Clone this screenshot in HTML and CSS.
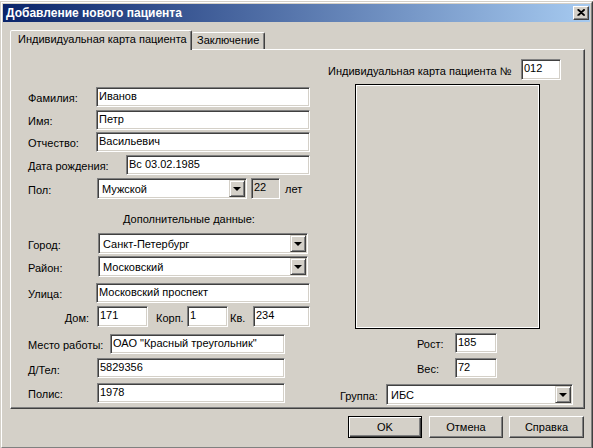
FILE: index.html
```html
<!DOCTYPE html>
<html lang="ru">
<head>
<meta charset="utf-8">
<title>Добавление нового пациента</title>
<link rel="stylesheet" href="styles.css">
</head>
<body>
<div class="window">
  <div class="frame">
    <div class="titlebar">
      <span class="title">Добавление нового пациента</span>
      <span class="close"><svg width="8" height="7" viewBox="0 0 8 7"><path d="M0.5 0.5 L7 6.5 M1.5 0.5 L8 6.5 M7 0.5 L0.5 6.5 M8 0.5 L1.5 6.5" stroke="#000" stroke-width="1.1" fill="none"/></svg></span>
    </div>
    <div class="client">
      <div class="tabs">
        <div class="tab active">Индивидуальная карта пациента</div>
        <div class="tab second">Заключение</div>
      </div>
      <div class="panel">
        <div class="left">
          <div class="row mt37"><span class="lbl">Фамилия:</span><span class="edit w214">Иванов</span></div>
          <div class="row mt3"><span class="lbl">Имя:</span><span class="edit w214">Петр</span></div>
          <div class="row mt2"><span class="lbl">Отчество:</span><span class="edit w214">Васильевич</span></div>
          <div class="row mt3"><span class="lbl w98">Дата рождения:</span><span class="edit w184">Вс 03.02.1985</span></div>
          <div class="row h21 mt3"><span class="lbl w69">Пол:</span><span class="select w150"><span class="sel-text">Мужской</span><span class="sel-btn"><i class="tri"></i></span></span><span class="edit readonly w29">22</span><span class="unit">лет</span></div>
          <div class="section">Дополнительные данные:</div>
          <div class="row h21 mt7"><span class="lbl w70">Город:</span><span class="select w210"><span class="sel-text">Санкт-Петербург</span><span class="sel-btn"><i class="tri"></i></span></span></div>
          <div class="row h21 mt2"><span class="lbl w70">Район:</span><span class="select w210"><span class="sel-text">Московский</span><span class="sel-btn"><i class="tri"></i></span></span></div>
          <div class="row mt6"><span class="lbl">Улица:</span><span class="edit w214">Московский проспект</span></div>
          <div class="row h21 mt3"><span class="lbl w69 ralign">Дом:</span><span class="edit w51">171</span><span class="lbl-korp">Корп.</span><span class="edit w41">1</span><span class="lbl-kv">Кв.</span><span class="edit w57">234</span></div>
          <div class="row mt7"><span class="lbl w82">Место работы:</span><span class="edit w175">ОАО "Красный треугольник"</span></div>
          <div class="row mt4"><span class="lbl w69 low">Д/Тел:</span><span class="edit w188">5829356</span></div>
          <div class="row mt5"><span class="lbl w69">Полис:</span><span class="edit w188">1978</span></div>
        </div>
        <div class="side">
          <div class="row h21 mt9"><span class="lbl w193">Индивидуальная карта пациента №</span><span class="edit w40">012</span></div>
          <div class="photo"></div>
          <div class="row mt4 indent89"><span class="lbl w38">Рост:</span><span class="edit w42">185</span></div>
          <div class="row mt5 indent89"><span class="lbl w38">Вес:</span><span class="edit w42">72</span></div>
          <div class="row h21 mt6 indent12"><span class="lbl w46">Группа:</span><span class="select w187"><span class="sel-text">ИБС</span><span class="sel-btn"><i class="tri"></i></span></span></div>
        </div>
      </div>
      <div class="buttons">
        <button class="btn default" type="button"><span>OK</span></button>
        <button class="btn" type="button"><span>Отмена</span></button>
        <button class="btn wide" type="button"><span>Справка</span></button>
      </div>
    </div>
  </div>
</div>
</body>
</html>
```
FILE: styles.css
```css
* { box-sizing: border-box; }
html, body { margin: 0; padding: 0; }
body {
  background: #ffffff;
  width: 593px;
  height: 448px;
  overflow: hidden;
  font-family: "Liberation Sans", Arial, sans-serif;
  font-size: 11px;
  color: #000;
}
.window {
  margin-top: 1px;
  width: 593px;
  height: 448px;
  background: #d4d0c8;
  border: 1px solid;
  border-color: #d4d0c8 #404040 #404040 #d4d0c8;
}
.frame {
  height: 100%;
  border: 1px solid;
  border-color: #ffffff #808080 #808080 #ffffff;
  padding: 1px;
}
.titlebar {
  height: 18px;
  background: linear-gradient(to right, #0a246a, #a6caf0);
  display: flex;
  align-items: center;
  justify-content: space-between;
  padding: 0 1px 0 3px;
}
.title {
  color: #fff;
  font-weight: bold;
  font-size: 12px;
  line-height: 14px;
}
.close {
  width: 16px;
  height: 14px;
  background: #d4d0c8;
  border: 1px solid;
  border-color: #ffffff #404040 #404040 #ffffff;
  box-shadow: inset -1px -1px 0 #808080;
  display: flex;
  align-items: center;
  justify-content: center;
  padding: 0 1px 1px 0;
}
.close svg { display: block; }
.client {
  padding: 8px 5px 0 7px;
}
.tabs {
  display: flex;
  align-items: flex-end;
  height: 19px;
  position: relative;
  z-index: 1;
}
.tab {
  height: 17px;
  padding: 0 6px;
  line-height: 15px;
  white-space: nowrap;
  background: #d4d0c8;
  border: 1px solid;
  border-bottom: none;
  border-color: #ffffff #404040 transparent #ffffff;
  border-radius: 2px 2px 0 0;
  box-shadow: inset -1px 0 0 #808080;
}
.tab.active {
  width: 182px;
  height: 20px;
  margin-bottom: -1px;
  padding-left: 7px;
  line-height: 16px;
}
.tab.second {
  width: 73px;
  border-left: none;
  padding-left: 5px;
}
.panel {
  width: 575px;
  height: 360px;
  display: flex;
  border: 1px solid;
  border-color: #ffffff #404040 #404040 #ffffff;
  box-shadow: inset -1px -1px 0 #808080;
  padding-left: 17px;
}
.left { width: 282px; display: flex; flex-direction: column; }
.side { width: 245px; margin-left: 18px; display: flex; flex-direction: column; }

.row { display: flex; align-items: center; height: 20px; flex: none; }
.h21 { height: 21px; }
.mt2 { margin-top: 2px; } .mt3 { margin-top: 3px; } .mt4 { margin-top: 4px; }
.mt5 { margin-top: 5px; } .mt6 { margin-top: 6px; } .mt7 { margin-top: 7px; }
.mt9 { margin-top: 9px; } .mt37 { margin-top: 37px; }
.indent89 { padding-left: 89px; }
.indent12 { padding-left: 12px; }

.lbl { width: 68px; flex: none; white-space: nowrap; padding-top: 2px; }
.lbl.low { padding-top: 4px; }
.lbl.ralign { text-align: right; padding-right: 8px; }
.w38 { width: 38px; } .w46 { width: 46px; } .w69 { width: 69px; } .w70 { width: 70px; }
.w82 { width: 82px; } .w98 { width: 98px; } .w193 { width: 193px; }

.edit {
  height: 100%;
  flex: none;
  align-self: stretch;
  background: #fff;
  border: 1px solid;
  border-color: #808080 #ffffff #ffffff #808080;
  box-shadow: inset 1px 1px 0 #404040, inset -1px -1px 0 #d4d0c8;
  padding: 2px 2px 0 2px;
  line-height: 13px;
  white-space: nowrap;
  overflow: hidden;
}
.edit.readonly { background: #d4d0c8; margin-left: 4px; }
.w29 { width: 29px; } .w40 { width: 40px; } .w41 { width: 41px; } .w42 { width: 42px; }
.w51 { width: 51px; } .w57 { width: 57px; } .w150 { width: 150px; } .w175 { width: 175px; }
.w184 { width: 184px; } .w187 { width: 187px; } .w188 { width: 188px; } .w210 { width: 210px; }
.w214 { width: 214px; }
.unit { margin-left: 5px; padding-top: 1px; }

.select {
  height: 100%;
  flex: none;
  display: flex;
  align-items: stretch;
  background: #fff;
  border: 1px solid;
  border-color: #808080 #ffffff #ffffff #808080;
  box-shadow: inset 1px 1px 0 #404040, inset -1px -1px 0 #d4d0c8;
  padding: 1px;
}
.sel-text {
  flex: 1;
  padding: 3px 0 0 3px;
  line-height: 13px;
  white-space: nowrap;
  overflow: hidden;
}
.sel-btn {
  width: 16px;
  flex: none;
  background: #d4d0c8;
  border: 1px solid;
  border-color: #d4d0c8 #404040 #404040 #d4d0c8;
  box-shadow: inset 1px 1px 0 #ffffff, inset -1px -1px 0 #808080;
  display: flex;
  align-items: center;
  justify-content: center;
}
.tri {
  display: block;
  width: 0;
  height: 0;
  border-left: 4px solid transparent;
  border-right: 4px solid transparent;
  border-top: 4px solid #000;
  margin: 1px 0 0 -1px;
}

.section {
  margin-top: 14px;
  padding-left: 95px;
  line-height: 13px;
  height: 13px;
  white-space: nowrap;
}
.lbl-korp { width: 39px; flex: none; padding-left: 8px; padding-top: 2px; }
.lbl-kv { width: 25px; flex: none; padding-left: 2px; padding-top: 2px; }

.photo {
  margin: 4px 0 0 27px;
  width: 185px;
  height: 245px;
  flex: none;
  border: 1px solid #000;
  box-shadow: inset 0 0 0 1px #ffffff;
}

.buttons {
  display: flex;
  justify-content: flex-end;
  gap: 6px;
  margin-top: 7px;
  width: 575px;
  padding-right: 1px;
}
.btn {
  width: 74px;
  height: 22px;
  padding: 0;
  margin: 0;
  font-family: inherit;
  font-size: 11px;
  color: #000;
  background: #d4d0c8;
  border: 1px solid;
  border-color: #ffffff #404040 #404040 #ffffff;
  box-shadow: inset -1px -1px 0 #808080;
  border-radius: 0;
}
.btn.wide { width: 75px; }
.btn.default {
  border: 1px solid #000;
  box-shadow: inset 1px 1px 0 #ffffff, inset -1px -1px 0 #404040, inset -2px -2px 0 #808080;
  margin-right: 1px;
}
```
